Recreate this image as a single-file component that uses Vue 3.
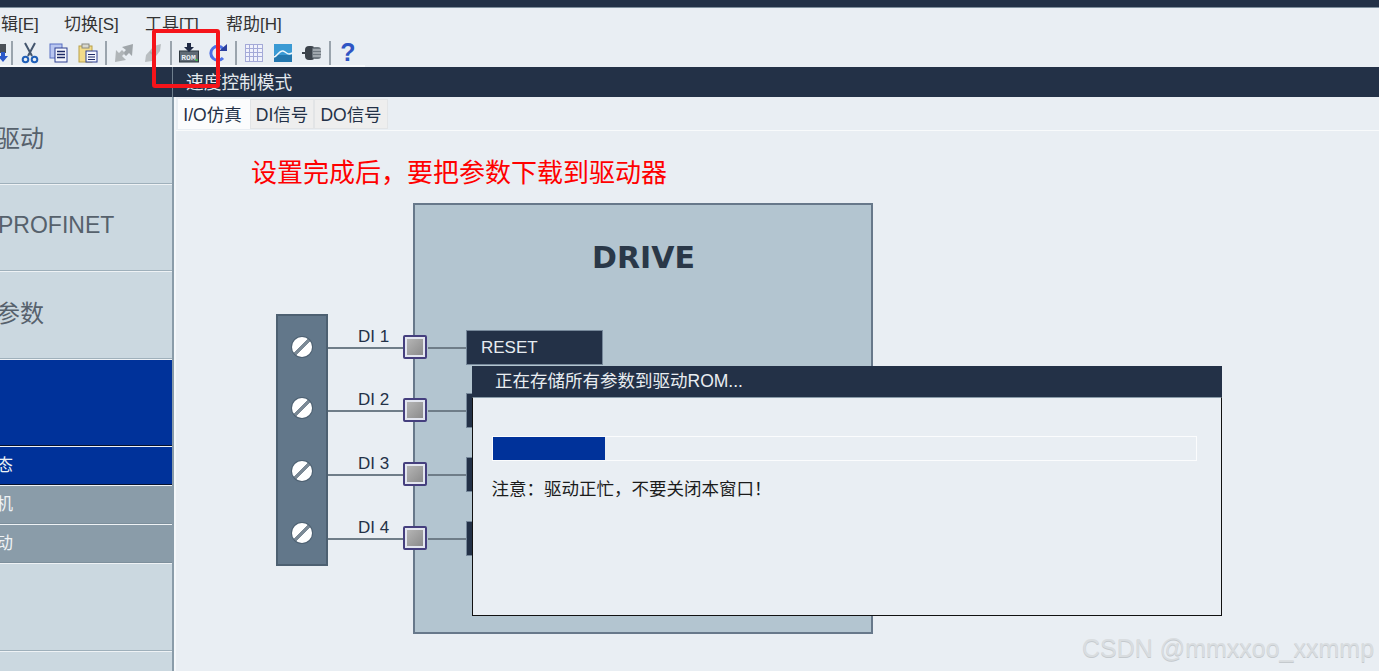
<template>
  <div class="app">
    <div class="topbar"></div>

    <div class="menubar">
      <span class="menu-item first">辑[E]</span>
      <span class="menu-item">切换[S]</span>
      <span class="menu-item">工具[T]</span>
      <span class="menu-item">帮助[H]</span>
    </div>

    <div class="toolbar">
      <span class="tool clipped">
        <svg width="20" height="20" viewBox="0 0 20 20">
          <rect x="3" y="1" width="14" height="9" fill="#4a5058" />
          <path d="M12 9h4v4h3l-5 6-5-6h3z" fill="#2a57c9" />
        </svg>
      </span>
      <i class="sep"></i>
      <span class="tool">
        <svg width="18" height="22" viewBox="0 0 18 22" fill="none">
          <path d="M4 1l7 13M14 1L7 14" stroke="#44566e" stroke-width="2" />
          <circle cx="4.500" cy="17.500" r="2.800" stroke="#1f5fb8" stroke-width="2" />
          <circle cx="13.500" cy="17.500" r="2.800" stroke="#1f5fb8" stroke-width="2" />
        </svg>
      </span>
      <span class="tool">
        <svg width="20" height="20" viewBox="0 0 20 20">
          <rect x="1" y="1" width="12" height="14" fill="#b9c6f0" stroke="#5a70c4" />
          <rect x="6" y="5" width="12" height="14" fill="#f4f6fd" stroke="#2c3f90" />
          <path d="M8 8.500h8M8 11.500h8M8 14.500h8" stroke="#1d2a66" stroke-width="1.500" />
        </svg>
      </span>
      <span class="tool">
        <svg width="20" height="20" viewBox="0 0 20 20">
          <rect x="1" y="3" width="13" height="16" fill="#f3dc8a" stroke="#b9a048" />
          <rect x="4" y="1" width="7" height="4" fill="#d8d8d0" stroke="#8a8a80" />
          <rect x="8" y="8" width="11" height="11" fill="#f4f6fd" stroke="#2c3f90" />
          <path d="M10 11.500h7M10 14h7M10 16.500h7" stroke="#1d2a66" />
        </svg>
      </span>
      <i class="sep"></i>
      <span class="tool">
        <svg width="22" height="20" viewBox="0 0 22 20">
          <path d="M20 1l-1 12-3-3-3 3-3-3 3-3-4-3z" fill="#a0a6aa" />
          <path d="M2 19l1-12 3 3 3-3 3 3-3 3 4 4z" fill="#b0b5b8" />
        </svg>
      </span>
      <span class="tool">
        <svg width="20" height="20" viewBox="0 0 20 20">
          <path d="M18 1l-1 7-8 10-7 1 1-7 8-9z" fill="#b9bec1" />
          <path d="M7 9l4 3" stroke="#a7adb0" stroke-width="2" />
        </svg>
      </span>
      <i class="sep"></i>
      <span class="tool">
        <svg width="22" height="20" viewBox="0 0 22 20">
          <rect x="1.500" y="8" width="19" height="11" fill="#5f6a74" stroke="#2f3840" />
          <path d="M9 0h4v4h3l-5 5-5-5h3z" fill="#1f2a44" />
          <text x="10.500" y="16.500" text-anchor="middle" class="rom-label">ROM</text>
          <rect x="17.500" y="16" width="2" height="2" fill="#3fbf4a" />
        </svg>
      </span>
      <span class="tool">
        <svg width="20" height="20" viewBox="0 0 20 20" fill="none">
          <path d="M15 5.500A7 7 0 1 0 15 15" stroke="#4c70e6" stroke-width="3" />
          <path d="M11 8h8V1z" fill="#2a3f9e" />
        </svg>
      </span>
      <i class="sep"></i>
      <span class="tool">
        <svg width="20" height="20" viewBox="0 0 20 20">
          <rect x="1.500" y="1.500" width="17" height="17" fill="#f0f2fc" stroke="#a4aad8" />
          <path d="M5.500 2v16M9.500 2v16M13.500 2v16M2 5.500h16M2 9.500h16M2 13.500h16" stroke="#a4aad8" />
        </svg>
      </span>
      <span class="tool">
        <svg width="20" height="20" viewBox="0 0 20 20" fill="none">
          <rect x="1" y="1" width="18" height="18" fill="#3a9ad4" />
          <rect x="1" y="12" width="18" height="7" fill="#2377ae" />
          <path d="M1 14c4-1 5-7 9-6s4 5 9 2" stroke="#eef7fc" stroke-width="1.500" />
        </svg>
      </span>
      <span class="tool">
        <svg width="20" height="16" viewBox="0 0 20 16">
          <rect x="0" y="7" width="5" height="2" fill="#3c434b" />
          <rect x="3" y="1" width="10" height="14" rx="4" fill="#3c434b" />
          <rect x="10" y="2" width="9" height="12" rx="3" fill="#6f7880" />
          <path d="M11 5h8M11 8h8M11 11h8" stroke="#d2d6da" />
        </svg>
      </span>
      <i class="sep"></i>
      <span class="tool help">?</span>
    </div>

    <div class="titlebar">
      <div class="titlebar-left"></div>
      <span class="titlebar-text">速度控制模式</span>
    </div>

    <div class="main">
      <aside class="sidebar">
        <div
          v-for="item in navItems"
          :key="item.id"
          class="nav-item"
          :class="item.kind"
        >
          <span class="nav-label">{{ item.label }}</span>
        </div>
      </aside>

      <section class="content">
        <div class="tabs">
          <span class="tab active">I/O仿真</span>
          <span class="tab">DI信号</span>
          <span class="tab">DO信号</span>
        </div>

        <div class="panel">
          <p class="notice">设置完成后，要把参数下载到驱动器</p>

          <div class="diagram">
            <div class="drive">
              <div class="drive-name">DRIVE</div>
            </div>

            <div class="terminal">
              <span
                v-for="s in screws"
                :key="s"
                class="screw"
                :style="{ top: s + 'px' }"
              ></span>
            </div>

            <div
              v-for="row in rows"
              :key="row.name"
              class="io-row"
              :style="{ top: row.top + 'px' }"
            >
              <span class="wire wire-out"></span>
              <span class="wire wire-in"></span>
              <span class="io-name">{{ row.name }}</span>
              <span class="connector"><span class="connector-face"></span></span>
              <span class="signal">{{ row.signal }}</span>
            </div>
          </div>
        </div>
      </section>
    </div>

    <div class="dialog">
      <div class="dialog-title">正在存储所有参数到驱动ROM...</div>
      <div class="dialog-body">
        <div class="progress">
          <div class="progress-fill" :style="{ width: progress + '%' }"></div>
        </div>
        <p class="dialog-note">注意：驱动正忙，不要关闭本窗口！</p>
      </div>
    </div>

    <div class="callout"></div>
    <div class="watermark">CSDN @mmxxoo_xxmmp</div>
  </div>
</template>

<script setup>
const navItems = [
  { id: 1, label: '驱动', kind: 'big' },
  { id: 2, label: 'PROFINET', kind: 'big latin' },
  { id: 3, label: '参数', kind: 'big' },
  { id: 4, label: '', kind: 'big selected' },
  { id: 5, label: '态', kind: 'sub selected' },
  { id: 6, label: '机', kind: 'sub' },
  { id: 7, label: '动', kind: 'sub' },
  { id: 8, label: '', kind: 'big' },
  { id: 9, label: '', kind: 'big' }
]

const screws = [21, 82, 145, 207]

const rows = [
  { name: 'DI 1', signal: 'RESET', top: 132 },
  { name: 'DI 2', signal: '', top: 195 },
  { name: 'DI 3', signal: '', top: 259 },
  { name: 'DI 4', signal: '', top: 323 }
]

const progress = 16
</script>

<style>
html,
body {
  margin: 0;
  background: #e9eef3;
}
</style>

<style scoped>
* {
  box-sizing: border-box;
}

.app {
  position: relative;
  width: 1379px;
  height: 671px;
  overflow: hidden;
  display: flex;
  flex-direction: column;
  background: #e9eef3;
  color: #233147;
  font-family: 'Liberation Sans', 'Noto Sans CJK SC', sans-serif;
}

.topbar {
  height: 8px;
  flex: none;
  background: #233147;
  border-bottom: 1px solid #7f8f9d;
}

.menubar {
  height: 30px;
  flex: none;
  display: flex;
  align-items: center;
  padding-bottom: 1px;
  font-size: 17px;
  color: #333;
}

.menu-item {
  width: 81px;
}

.menu-item.first {
  width: 64px;
  padding-left: 1px;
}

.toolbar {
  height: 29px;
  flex: none;
  display: flex;
  align-items: center;
  background: linear-gradient(#f7f9fb, #f7f9fb) left bottom / 365px 2px no-repeat;
}

.tool {
  width: 29px;
  height: 26px;
  flex: none;
  display: flex;
  align-items: center;
  justify-content: center;
}

.tool.clipped {
  width: 8.5px;
  overflow: hidden;
  justify-content: flex-end;
}

.tool svg {
  flex: none;
}

.sep {
  width: 7px;
  height: 24px;
  flex: none;
  background: linear-gradient(#9aa4ad, #9aa4ad) center / 2px 100% no-repeat;
}

.help {
  font-size: 25px;
  font-weight: 700;
  color: #2f55c4;
}

.rom-label {
  font-family: 'Liberation Mono', monospace;
  font-size: 8px;
  font-weight: 700;
  fill: #e8edf2;
}

.titlebar {
  height: 30px;
  flex: none;
  display: flex;
  align-items: center;
  background: #233147;
}

.titlebar-left {
  width: 173px;
  height: 100%;
  border-right: 1px solid #6f7f8e;
}

.titlebar-text {
  margin-left: 13px;
  padding-bottom: 2px;
  font-size: 17.700px;
  color: #e4e9ee;
}

.main {
  flex: 1;
  min-height: 0;
  display: flex;
}

.sidebar {
  width: 174px;
  flex: none;
  background: #cbd8e0;
  border-right: 2px solid #8a9ca9;
  box-shadow: 2px 0 0 #f4f7fa;
}

.nav-item {
  display: flex;
  align-items: center;
  overflow: hidden;
  white-space: nowrap;
  border-bottom: 1px solid #9fb0bb;
  box-shadow: 0 1px 0 #eef2f5;
  margin-bottom: 1px;
}

.nav-item.big {
  height: 86.600px;
  padding-bottom: 7px;
  font-size: 24px;
  color: #56616c;
}

.nav-item.latin {
  padding-bottom: 4px;
  font-size: 23px;
}

.nav-item.sub {
  height: 38px;
  padding-bottom: 5px;
  font-size: 17px;
  color: #eef2f5;
  background: #8a9ca9;
  border-bottom-color: #7d8f9c;
}

.nav-item.selected {
  background: #00329a;
  color: #eef2f5;
  border-bottom-color: #06122e;
}

.nav-item.sub .nav-label {
  margin-left: -4px;
}

.nav-item.big .nav-label {
  margin-left: -4px;
}

.nav-item.latin .nav-label {
  margin-left: -2px;
}

.content {
  flex: 1;
  min-width: 0;
  display: flex;
  flex-direction: column;
  padding-left: 2px;
}

.tabs {
  height: 34px;
  flex: none;
  display: flex;
  align-items: flex-end;
  padding: 3px 0 1px 2px;
  border-bottom: 1px solid #f8fafb;
}

.tab {
  height: 30px;
  width: 64px;
  display: flex;
  align-items: center;
  justify-content: center;
  padding-bottom: 2px;
  font-size: 17.500px;
  color: #233147;
  background: #eeeeee;
  border: 1px solid #e2e4e6;
}

.tab.active {
  width: 72px;
  padding-right: 3px;
  background: #fbfcfd;
  border-color: #fbfcfd;
}

.tab:last-child {
  width: 74px;
}

.panel {
  position: relative;
  flex: 1;
  min-height: 0;
}

.notice {
  margin: 0;
  padding: 26px 0 0 75px;
  font-size: 26px;
  line-height: 32px;
  color: #ff0000;
}

.diagram {
  position: absolute;
  left: 100px;
  top: 72px;
  width: 597px;
  height: 431px;
}

.drive {
  position: absolute;
  left: 137px;
  top: 0;
  width: 460px;
  height: 431px;
  background: #b3c5d0;
  border: 2px solid #67788a;
}

.drive-name {
  margin-top: 35px;
  padding-left: 177px;
  font-family: 'DejaVu Sans', sans-serif;
  font-size: 30px;
  font-weight: 700;
  line-height: 36px;
  color: #2a3848;
}

.terminal {
  position: absolute;
  left: 0;
  top: 111px;
  width: 52px;
  height: 252px;
  background: #62778a;
  border: 2px solid #4d6071;
}

.screw {
  position: absolute;
  left: 14px;
  width: 20px;
  height: 20px;
  border-radius: 50%;
  background: linear-gradient(135deg, #fff 0 44%, #7c8a96 44% 56%, #fff 56%);
  box-shadow: 0 0 0 1px #4d6071;
}

.io-row {
  position: absolute;
  left: 52px;
  width: 275px;
  height: 24px;
}

.wire {
  position: absolute;
  top: 12px;
  height: 1.500px;
  background: #6f7d88;
}

.wire-out {
  left: 0;
  width: 76px;
}

.wire-in {
  left: 100px;
  width: 38px;
}

.io-name {
  position: absolute;
  left: 30px;
  top: -8px;
  font-size: 17px;
  line-height: 20px;
  color: #233147;
}

.connector {
  position: absolute;
  left: 75px;
  top: 0;
  width: 24px;
  height: 24px;
  padding: 2px;
  background: #e3e6ef;
  border: 2px solid #453f7e;
  border-radius: 2px;
}

.connector-face {
  display: block;
  width: 100%;
  height: 100%;
  background: linear-gradient(135deg, #b5b5b5, #8b8b8b);
}

.signal {
  position: absolute;
  left: 138px;
  top: -5px;
  width: 137px;
  height: 35px;
  padding-left: 14px;
  line-height: 33px;
  font-size: 17px;
  color: #e6ebf0;
  background: #233147;
  border: 1px solid #76889a;
}

.dialog {
  position: absolute;
  left: 472px;
  top: 366px;
  width: 750px;
  height: 250px;
  display: flex;
  flex-direction: column;
  background: #e9eef3;
}

.dialog-title {
  height: 31px;
  flex: none;
  padding-left: 23px;
  line-height: 31px;
  font-size: 17.500px;
  color: #e9edf1;
  background: #233147;
}

.dialog-body {
  flex: 1;
  padding: 38px 24px 0 18.500px;
  border: 1.500px solid #111;
  border-top: 1px solid #8a9ca9;
}

.progress {
  height: 25px;
  border: 1px solid #fbfcfd;
}

.progress-fill {
  height: 100%;
  background: #00329a;
}

.dialog-note {
  margin: 16px 0 0;
  font-size: 17.500px;
  line-height: 24px;
  color: #1b1b1b;
}

.callout {
  position: absolute;
  left: 152px;
  top: 29px;
  width: 68px;
  height: 59px;
  border: 4px solid #f5141a;
  border-radius: 3px;
}

.watermark {
  position: absolute;
  left: 1082px;
  top: 634px;
  font-size: 25px;
  line-height: 28px;
  white-space: nowrap;
  color: #d9dde0;
  text-shadow: 0 1px 0 #c4c9cd;
}
</style>
